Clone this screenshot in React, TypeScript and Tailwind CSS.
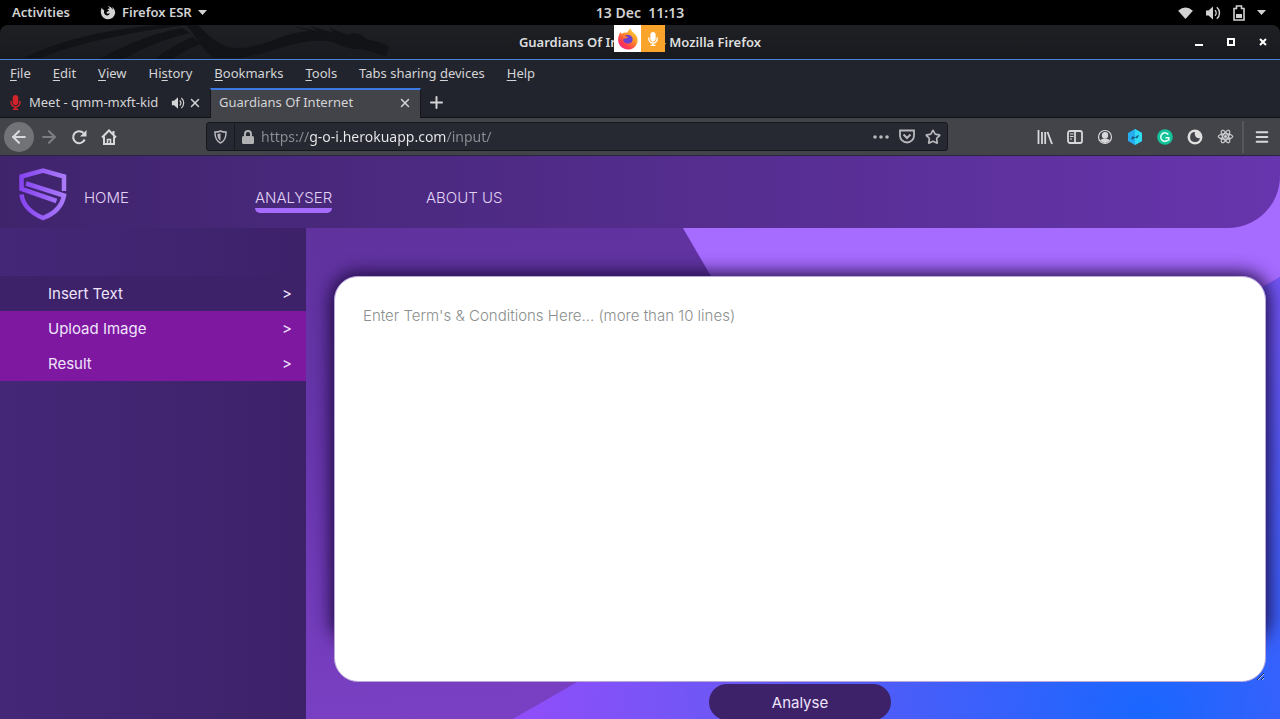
import { useState } from 'react'
import type { ReactNode } from 'react'
import { FaMicrophone, FaReact } from 'react-icons/fa'
import { ArrowLeft, ArrowRight, Menu, Plus, Star, X } from 'lucide-react'

const menus = [
  { before: '', key: 'F', after: 'ile' },
  { before: '', key: 'E', after: 'dit' },
  { before: '', key: 'V', after: 'iew' },
  { before: 'Hi', key: 's', after: 'tory' },
  { before: '', key: 'B', after: 'ookmarks' },
  { before: '', key: 'T', after: 'ools' },
  { before: 'Tabs sharing ', key: 'd', after: 'evices' },
  { before: '', key: 'H', after: 'elp' },
]

const navLinks = ['HOME', 'ANALYSER', 'ABOUT US']
const sideLinks = ['Insert Text', 'Upload Image', 'Result']

function Speaker({ className }: { className?: string }) {
  return (
    <svg viewBox="0 0 16 16" className={className} fill="none" stroke="currentColor" strokeWidth="1.4" aria-hidden="true">
      <path d="M1 5.5h2.5L8 1.5v13L3.5 10.5H1z" fill="currentColor" stroke="none" />
      <path d="M10 5.2a4 4 0 0 1 0 5.6M11.8 2.2a7.6 7.6 0 0 1 0 11.6" />
    </svg>
  )
}

function Caret() {
  return (
    <svg viewBox="0 0 9 5" className="h-[5px] w-[9px]" aria-hidden="true">
      <path d="M0 0h9L4.5 5z" fill="currentColor" />
    </svg>
  )
}

function TopBar() {
  return (
    <div className="grid h-[25px] shrink-0 grid-cols-[1fr_auto_1fr] items-center bg-black px-3 font-semibold text-[#d2d2d2]">
      <div className="flex items-center text-[13px]">
        <button className="w-[88px] text-left">Activities</button>
        <button className="flex items-center gap-1.5">
          <svg viewBox="0 0 16 16" className="size-4" aria-hidden="true">
            <path d="M2.2 2.2C.8 4 .6 6.2 1 8.5A7.2 7.2 0 0 0 15.2 8C15.2 5.5 14 3 11.8 1.7c.8 1.2 1 2 .9 3C11.5 2 9.500 1 7.5 1.2c1.2.5 2 1.3 2.3 2.3-1-.2-2 .1-2.5.8L9 5.5c-.2.8-1 1.1-2 1.2l-.6 1.2c.8 1 2.1.9 3.4.2-.3 1.7-1.6 2.6-3.100 2.300C4.3 9.900 3.500 7.500 4.200 5.300L2.200 4z" fill="currentColor" />
          </svg>
          Firefox ESR
          <Caret />
        </button>
      </div>
      <time className="whitespace-pre text-sm">13 Dec  11:13</time>
      <button aria-label="System menu" className="flex items-center gap-3 justify-self-end pr-[2px]">
        <svg viewBox="0 0 16 13" className="h-[12px] w-[15px]" aria-hidden="true"><path d="M0 4Q8-3 16 4L8 13z" fill="currentColor" /></svg>
        <Speaker className="size-4" />
        <svg viewBox="0 0 12 16" className="h-[16px] w-[12px]" aria-hidden="true">
          <path d="M1 3.5h2.5V1h5v2.500H11V15H1z" fill="none" stroke="currentColor" strokeWidth="1.6" />
          <path d="M3 9h6v4H3z" fill="currentColor" />
        </svg>
        <Caret />
      </button>
    </div>
  )
}

function Dragon() {
  return (
    <svg viewBox="0 0 430 34" className="absolute left-0 top-0 h-[34px] w-[430px]" fill="#121317" aria-hidden="true">
      <path d="M24 33C65 13 110 4 160 0h28C130 7 82 17 40 33z" />
      <path d="M100 34C128 18 155 8 182 3l8 5c-25 6-46 14-66 26zM155 34c12-9 23-16 38-22l8 7c-12 4-20 9-28 15z" />
      <path d="M186 0h12c12 12 23 24 42 23 26-1 44-16 70-17l-18-5 26 5-8-5 24 7-5-5 19 7c7-4 13-1 20 5 12 1 22 6 21 8l-3 8c-9-1-17-7-30-7-12 0-18-7-30-8-30-3-55 13-87 17h-25C203 27 196 10 186 0z" />
    </svg>
  )
}

function TitleBar() {
  return (
    <div className="relative flex h-[35px] shrink-0 items-center justify-center rounded-t-lg border-b border-b-[#4a80dc] bg-linear-to-b from-[#1e2024] to-[#181a1f] text-[13px] font-semibold text-[#dedede]">
      <Dragon />
      <h1 className="relative pt-0.5">Guardians Of Internet - Mozilla Firefox</h1>
      <div className="absolute left-1/2 top-0 flex h-[27px] w-[51px] -translate-x-[26px]">
        <div className="flex w-[27px] items-center justify-center bg-white">
          <svg viewBox="0 0 22 22" className="size-[22px]" aria-hidden="true">
            <defs>
              <linearGradient id="fox" x1="1" y1="0" x2=".2" y2="1">
                <stop offset="0" stopColor="#ffe34a" />
                <stop offset=".45" stopColor="#ff9226" />
                <stop offset=".8" stopColor="#ff3750" />
                <stop offset="1" stopColor="#f0278d" />
              </linearGradient>
            </defs>
            <path d="M3.5 4c0 1 .5 1.5 1.5 1.7 1.5-1 3.5-1.5 5-1C11 3 12 1 14 .5c0 2 1 3 2.5 4.2 3 2 4.5 5 4 8.5C20 18 16 21.5 11 21.5S1.500 18 1.200 12.500C1 9 2 6 3.500 4z" fill="url(#fox)" />
            <path d="M8 7.5c2.500-1.500 6-.5 7.200 2 1.300 3-.7 6-4 6s-5.200-2.200-4.900-4.600l4.200-.8c.8-.5.5-1-.5-1.4z" fill="#6b3fd0" />
          </svg>
        </div>
        <div className="flex flex-1 items-center justify-center bg-[#fba42c] text-white">
          <FaMicrophone className="size-[14px]" />
        </div>
      </div>
      <div className="absolute right-3 flex items-center gap-[22px] text-white">
        <button aria-label="Minimize"><svg viewBox="0 0 10 10" className="size-[10px]"><path d="M1 7h8v2H1z" fill="currentColor" /></svg></button>
        <button aria-label="Maximize"><svg viewBox="0 0 10 10" className="size-[10px]"><path d="M2 2h6v6H2z" fill="none" stroke="currentColor" strokeWidth="2" /></svg></button>
        <button aria-label="Close"><svg viewBox="0 0 10 10" className="size-[10px]"><path d="M2 2l6 6M8 2L2 8" fill="none" stroke="currentColor" strokeWidth="2" /></svg></button>
      </div>
    </div>
  )
}

function MenuBar() {
  return (
    <div className="flex h-7 shrink-0 items-center gap-[22px] bg-[#22242d] pl-2.5 text-[13px] text-[#d4d4d6]">
      {menus.map((m) => (
        <button key={m.after}>
          {m.before}<span className="underline underline-offset-2">{m.key}</span>{m.after}
        </button>
      ))}
    </div>
  )
}

function Tabs() {
  return (
    <div className="flex h-[30px] shrink-0 items-stretch border-b border-[#101116] bg-[#22242d] text-[13px] text-[#d4d4d6]">
      <div className="flex w-[210px] items-center pl-2">
        <FaMicrophone className="mr-[6px] size-[15px] text-[#d4232a]" />
        <span className="flex-1 whitespace-nowrap">Meet - qmm-mxft-kid</span>
        <Speaker className="mr-[3px] size-[14px]" />
        <button aria-label="Close Meet tab" className="mr-2"><X className="size-[14px]" strokeWidth={2.5} /></button>
      </div>
      <div className="-mb-px flex w-[211px] items-center border-x border-t-2 border-x-[#15161b] border-t-[#3c7ae0] bg-[#42444a] pb-0.5 pl-2">
        <span className="flex-1">Guardians Of Internet</span>
        <button aria-label="Close tab" className="mr-2"><X className="size-[14px]" strokeWidth={2.5} /></button>
      </div>
      <button aria-label="New tab" className="ml-1.5"><Plus className="size-[19px]" strokeWidth={2.5} /></button>
    </div>
  )
}

function Tool({ label, children }: { label: string; children: ReactNode }) {
  return <button aria-label={label} className="flex size-[30px] shrink-0 items-center justify-center">{children}</button>
}

function Toolbar() {
  const [url, setUrl] = useState('https://g-o-i.herokuapp.com/input/')

  return (
    <div className="flex h-[38px] shrink-0 items-center border-b border-[#2c2440] bg-[#42444a] pl-1 text-[#d8d8da]">
      <button aria-label="Back" className="flex size-[30px] items-center justify-center rounded-full bg-[#727376]"><ArrowLeft className="size-5" strokeWidth={2.5} /></button>
      <Tool label="Forward"><ArrowRight className="size-5 text-[#7d7e82]" strokeWidth={2.5} /></Tool>
      <Tool label="Reload">
        <svg viewBox="0 0 16 16" className="size-4" fill="none" stroke="currentColor" strokeWidth="2">
          <path d="M13.7 10.5A6 6 0 1 1 12.500 4" />
          <path d="M15.500 1v6.500H9z" fill="currentColor" stroke="none" />
        </svg>
      </Tool>
      <Tool label="Home">
        <svg viewBox="0 0 16 16" className="size-4" fill="none" stroke="currentColor" strokeWidth="2">
          <path d="M1 8.500l7-7 7 7M3 7.500V15h10V7.500M12.500 2v4" />
          <path d="M6.500 15v-4.500h3V15" strokeWidth="1.600" />
        </svg>
      </Tool>
      <div className="ml-[82px] flex h-[29px] w-[742px] items-center rounded-[3px] border border-[#17181d] bg-[#262832]">
        <div className="flex h-full w-7 items-center justify-center border-r border-[#191a20]">
          <svg viewBox="0 0 14 15" className="h-[14px] w-[13px] text-[#b7b7bb]" aria-hidden="true">
            <path d="M7 1c2 1 4 1.200 6 1.200 0 5.500-1 9.600-6 11.800C2 11.800 1 7.700 1 2.200 3 2.200 5 2 7 1z" fill="none" stroke="currentColor" strokeWidth="1.600" />
            <path d="M7 3.500v8C4.500 10 3.700 7.500 3.600 4.300 5 4.300 6 4 7 3.500z" fill="currentColor" />
          </svg>
        </div>
        <svg viewBox="0 0 12 14" className="mx-[7px] h-[14px] w-[12px] text-[#b2b2b5]" aria-hidden="true">
          <path d="M3 7V4a3 3 0 0 1 6 0v3" fill="none" stroke="currentColor" strokeWidth="2" />
          <rect y="6" width="12" height="8" rx="1.500" fill="currentColor" />
        </svg>
        <input
          aria-label="Address"
          value={url}
          onChange={(e) => setUrl(e.target.value)}
          className="min-w-0 flex-1 bg-[linear-gradient(90deg,#8d8e94_48px,#ececee_48px_185px,#8d8e94_185px)] bg-clip-text text-sm text-transparent caret-white outline-none"
        />
        <div className="flex items-center gap-[10px] pr-1.5 text-[#b9b9bd]">
          <button aria-label="Page actions">
            <svg viewBox="0 0 16 4" className="h-1 w-4" fill="currentColor"><circle cx="2" cy="2" r="1.800" /><circle cx="8" cy="2" r="1.800" /><circle cx="14" cy="2" r="1.800" /></svg>
          </button>
          <button aria-label="Save to Pocket">
            <svg viewBox="0 0 16 15" className="h-[15px] w-4" fill="none" stroke="currentColor" strokeWidth="1.800"><path d="M1 1.500h14v5a7 7 0 0 1-14 0z" /><path d="M4.500 5.500L8 9l3.500-3.500" strokeWidth="2" /></svg>
          </button>
          <button aria-label="Bookmark this page"><Star className="size-4" strokeWidth={2.5} /></button>
        </div>
      </div>
      <div className="ml-auto flex h-full items-center">
        <Tool label="Library">
          <svg viewBox="0 0 16 16" className="size-4" stroke="currentColor" strokeWidth="1.800"><path d="M1.500 1v14M5 3v12M8.200 3v12M10.500 3L15 15" /></svg>
        </Tool>
        <Tool label="Sidebars">
          <svg viewBox="0 0 16 16" className="size-4" fill="none" stroke="currentColor" strokeWidth="1.800"><rect x="1" y="2" width="14" height="12" rx="2" /><path d="M8 2v12" /><path d="M3 5h3.500M3 7.500h3.500M3 10h2" strokeWidth="1.200" /></svg>
        </Tool>
        <Tool label="Account">
          <svg viewBox="0 0 16 16" className="size-4" fill="none" stroke="currentColor" strokeWidth="1.200"><circle cx="8" cy="8" r="6.500" /><circle cx="8" cy="6.200" r="2.600" fill="currentColor" /><path d="M4 11.300q4-3 8 0-4 4-8 0z" fill="currentColor" /></svg>
        </Tool>
        <Tool label="Extension">
          <svg viewBox="0 0 16 16" className="size-4">
            <path d="M8 0l7 4v8l-7 4-7-4V4z" fill="#27aef0" />
            <path d="M8 0l7 4v8l-7 4z" fill="#2fdcf4" />
            <path d="M4 9l2.500-2.500V8h2l3-2.500v2L9.500 10V8.800h-2L5.500 11z" fill="#155d85" />
          </svg>
        </Tool>
        <Tool label="Grammarly">
          <svg viewBox="0 0 16 16" className="size-4" fill="none"><circle cx="8" cy="8" r="7.800" fill="#15c39a" /><path d="M11.300 5.500a4.200 4.200 0 1 0-.3 5.500M8.500 8.700h3.300v3" stroke="#e9fff9" strokeWidth="1.500" /></svg>
        </Tool>
        <Tool label="Dark mode">
          <svg viewBox="0 0 16 16" className="size-4"><circle cx="8" cy="8" r="7.500" fill="#dededf" /><path d="M8 3a5 5 0 1 0 5 6c-3 1-6-2-5-6z" fill="#42444a" /></svg>
        </Tool>
        <Tool label="React Developer Tools"><FaReact className="size-[15px] overflow-visible" stroke="currentColor" strokeWidth={18} /></Tool>
        <div className="ml-0.5 h-8 w-0.5 bg-[#55575c]" />
        <button aria-label="Open menu" className="mx-2.5"><Menu className="size-4" strokeWidth={3} /></button>
      </div>
    </div>
  )
}

function Logo() {
  return (
    <svg viewBox="0 0 50 54" className="mt-1 h-[54px] w-[50px]" fill="none" stroke="url(#shield)" strokeWidth="4.500" aria-label="Guardians Of Internet" role="img">
      <defs>
        <linearGradient id="shield" gradientUnits="userSpaceOnUse" x1="1" y1="0" x2="49" y2="0">
          <stop offset="0" stopColor="#8542f0" />
          <stop offset="1" stopColor="#ab7dfa" />
        </linearGradient>
      </defs>
      <path d="M46 24V9.500L25 3.500 3.500 9.500v12.500l35 12" />
      <path d="M8 16.500L46 28.500C44 39 37 46.500 25 51 12 45.500 5 38.500 3.500 27.500" />
    </svg>
  )
}

function SiteHeader() {
  return (
    <header className="relative flex h-[72px] shrink-0 items-center rounded-br-[52px] bg-linear-to-r from-[#3f246c] to-[#6735ad] pl-[18px]">
      <Logo />
      <nav className="ml-4 mt-4 flex text-[15px] font-light leading-5 text-[#e2d3f6]">
        {navLinks.map((name) => (
          <div key={name} className="w-[171px] pb-1">
            <a
              href="#"
              className={name === 'ANALYSER' ? 'relative inline-block after:absolute after:inset-x-0 after:-bottom-[5px] after:h-[5px] after:rounded-b-[5px] after:bg-[#a66bff]' : 'inline-block'}
            >
              {name}
            </a>
          </div>
        ))}
      </nav>
    </header>
  )
}

function Sidebar() {
  return (
    <aside className="w-[306px] shrink-0 bg-linear-to-r from-[#442777] to-[#3d226a] pt-12">
      {sideLinks.map((name) => (
        <a
          key={name}
          href="#"
          className={`flex h-[35px] items-center justify-between pl-12 pr-3.5 pt-0.5 text-[15px] text-[#efe4fb] ${name === 'Insert Text' ? 'bg-[#3d226a]' : 'bg-[#7e18a1]'}`}
        >
          {name}
          <span>&gt;</span>
        </a>
      ))}
    </aside>
  )
}

function Backdrop() {
  return (
    <svg viewBox="0 0 1280 563" preserveAspectRatio="none" className="absolute inset-0 size-full" aria-hidden="true">
      <defs>
        <linearGradient id="dusk" x1=".2" y1="0" x2=".35" y2="1">
          <stop offset="0" stopColor="#5d3199" />
          <stop offset=".5" stopColor="#6736ac" />
          <stop offset="1" stopColor="#7a40c4" />
        </linearGradient>
        <radialGradient id="ocean" gradientUnits="userSpaceOnUse" cx="1145" cy="560" r="650">
          <stop offset="0" stopColor="#1967ff" />
          <stop offset=".25" stopColor="#3a60fb" />
          <stop offset=".65" stopColor="#6d57f5" />
          <stop offset="1" stopColor="#944dfa" />
        </radialGradient>
      </defs>
      <path d="M0 0h1280v563H0z" fill="url(#dusk)" />
      <path d="M513 563L1280 121v442z" fill="url(#ocean)" />
      <path d="M641 0h639v121L854 366z" fill="#a66bff" />
    </svg>
  )
}

export default function App() {
  const [terms, setTerms] = useState('')

  return (
    <div className="flex h-screen flex-col overflow-hidden bg-black font-['Noto_Sans',sans-serif]">
      <TopBar />
      <TitleBar />
      <MenuBar />
      <Tabs />
      <Toolbar />
      <div className="relative flex min-h-0 flex-1 flex-col font-['Inter',sans-serif]">
        <Backdrop />
        <SiteHeader />
        <div className="relative flex min-h-0 flex-1">
          <Sidebar />
          <main className="flex min-w-0 flex-1 flex-col items-center pl-7 pr-3.5 pt-12">
            <div className="relative min-h-0 w-full flex-1">
              <div className="absolute inset-x-0 bottom-10 top-0 rounded-3xl shadow-[0_0_18px_3px_#1d0b3d]" />
              <textarea
                aria-label="Terms and conditions"
                value={terms}
                onChange={(e) => setTerms(e.target.value)}
                placeholder="Enter Term's & Conditions Here... (more than 10 lines)"
                className="relative block size-full rounded-3xl border border-[#b9a8d8] bg-white px-7 py-[29px] text-[15px] font-light leading-5 text-[#333] outline-none placeholder:text-[#8b8f8d]"
              />
            </div>
            <button className="-mb-px mt-0.5 h-9 w-[182px] shrink-0 rounded-full bg-[#3d226a] pt-0.5 text-[15px] text-[#efe4fb]">Analyse</button>
          </main>
        </div>
      </div>
    </div>
  )
}
